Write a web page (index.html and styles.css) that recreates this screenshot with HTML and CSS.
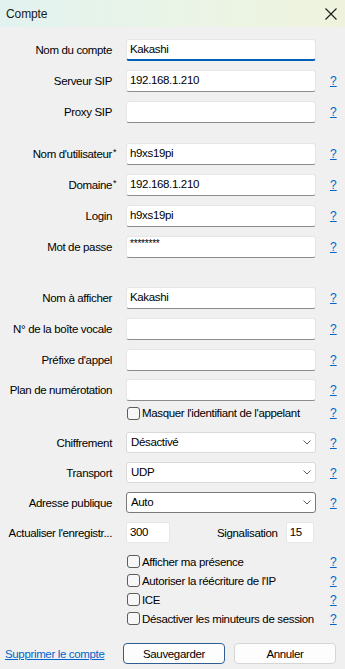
FILE: index.html
```html
<!DOCTYPE html>
<html lang="fr">
<head>
<meta charset="utf-8">
<title>Compte</title>
<link rel="stylesheet" href="styles.css">
</head>
<body>
<div class="window">
  <header class="titlebar">
    <span class="title">Compte</span>
    <svg class="close" width="12" height="12" viewBox="0 0 12 12"><path d="M0.5 0.5 L11.5 11.5 M11.5 0.5 L0.5 11.5" stroke="#1a1a1a" stroke-width="1.1" fill="none"/></svg>
  </header>
  <main class="form">
    <div class="row r1"><span class="lbl">Nom du compte</span><div class="field focused">Kakashi</div><span class="help"></span></div>
    <div class="row"><span class="lbl">Serveur SIP</span><div class="field">192.168.1.210</div><a class="help">?</a></div>
    <div class="row"><span class="lbl">Proxy SIP</span><div class="field"></div><a class="help">?</a></div>

    <div class="row group"><span class="lbl">Nom d'utilisateur<span class="req">*</span></span><div class="field">h9xs19pi</div><a class="help">?</a></div>
    <div class="row"><span class="lbl">Domaine<span class="req">*</span></span><div class="field">192.168.1.210</div><a class="help">?</a></div>
    <div class="row"><span class="lbl">Login</span><div class="field">h9xs19pi</div><a class="help">?</a></div>
    <div class="row"><span class="lbl">Mot de passe</span><div class="field pwd">********</div><a class="help">?</a></div>

    <div class="row group2"><span class="lbl">Nom à afficher</span><div class="field">Kakashi</div><a class="help">?</a></div>
    <div class="row"><span class="lbl">N° de la boîte vocale</span><div class="field"></div><a class="help">?</a></div>
    <div class="row"><span class="lbl">Préfixe d'appel</span><div class="field"></div><a class="help">?</a></div>
    <div class="row tight"><span class="lbl">Plan de numérotation</span><div class="field"></div><a class="help">?</a></div>

    <div class="row check masq"><span class="lbl"></span><label class="cb"><span class="box"></span>Masquer l'identifiant de l'appelant</label><a class="help">?</a></div>

    <div class="row sel first"><span class="lbl">Chiffrement</span><div class="field select">Désactivé<svg class="chev" width="8" height="5" viewBox="0 0 8 5"><path d="M0.5 0.5 L4 4 L7.5 0.5" stroke="#606060" fill="none"/></svg></div><a class="help">?</a></div>
    <div class="row sel"><span class="lbl">Transport</span><div class="field select">UDP<svg class="chev" width="8" height="5" viewBox="0 0 8 5"><path d="M0.5 0.5 L4 4 L7.5 0.5" stroke="#606060" fill="none"/></svg></div><a class="help">?</a></div>
    <div class="row sel"><span class="lbl">Adresse publique</span><div class="field select hover">Auto<svg class="chev" width="8" height="5" viewBox="0 0 8 5"><path d="M0.5 0.5 L4 4 L7.5 0.5" stroke="#606060" fill="none"/></svg></div><a class="help">?</a></div>

    <div class="row sel timers"><span class="lbl">Actualiser l'enregistr...</span>
      <div class="timer-line"><div class="field small">300</div><span class="sig">Signalisation</span><div class="field tiny">15</div></div>
    </div>

    <div class="checks">
      <div class="row check"><span class="lbl"></span><label class="cb"><span class="box"></span>Afficher ma présence</label><a class="help">?</a></div>
      <div class="row check"><span class="lbl"></span><label class="cb"><span class="box"></span>Autoriser la réécriture de l'IP</label><a class="help">?</a></div>
      <div class="row check"><span class="lbl"></span><label class="cb"><span class="box"></span>ICE</label><a class="help">?</a></div>
      <div class="row check"><span class="lbl"></span><label class="cb"><span class="box"></span>Désactiver les minuteurs de session</label><a class="help">?</a></div>
    </div>
  </main>
  <footer class="footer">
    <a class="delete">Supprimer le compte</a>
    <button class="btn primary">Sauvegarder</button>
    <button class="btn">Annuler</button>
  </footer>
</div>
</body>
</html>
```
FILE: styles.css
```css
html, body {
  margin: 0;
  padding: 0;
}
body {
  background: #f0f0f0;
  font-family: "Liberation Sans", Arial, sans-serif;
  font-size: 11.5px;
  letter-spacing: -0.35px;
  color: #000;
  width: 345px;
  height: 669px;
  overflow: hidden;
}
.window {
  display: flex;
  flex-direction: column;
  height: 669px;
}
.titlebar {
  height: 27px;
  display: flex;
  align-items: center;
  justify-content: space-between;
  padding: 0 5px 0 6px;
  background: linear-gradient(to right, #e2f2f0 0%, #e9f4e8 45%, #eff3dd 100%);
  box-sizing: border-box;
  flex: none;
}
.title {
  color: #1a1a1a;
  font-size: 12px;
  letter-spacing: -0.1px;
}
.close {
  display: block;
  margin-right: 3px;
}
.form {
  display: flex;
  flex-direction: column;
  padding-top: 12px;
}
.row {
  display: grid;
  grid-template-columns: 112px 190px 1fr;
  column-gap: 14px;
  align-items: center;
  height: 22px;
  margin-top: 9px;
}
.row.r1 { margin-top: 0; }
.row.group { margin-top: 20px; }
.row.group2 { margin-top: 29px; }
.row.tight { margin-top: 8px; }
.lbl {
  text-align: right;
  white-space: nowrap;
  line-height: 16px;
}
.req {
  display: inline-block;
  width: 6px;
  margin-right: -6px;
  text-align: left;
  padding-left: 1px;
  box-sizing: border-box;
  font-size: 9px;
  vertical-align: 3px;
  line-height: 10px;
}
.field {
  box-sizing: border-box;
  height: 22px;
  background: #fff;
  border: 1px solid #e6e6e6;
  border-bottom-color: #8c8c8c;
  border-radius: 3px;
  padding: 0 3px;
  line-height: 19px;
  white-space: nowrap;
  overflow: hidden;
}
.field.focused {
  border-bottom: 2px solid #005fb8;
  line-height: 18px;
}
.field.pwd {
  font-size: 10px;
  line-height: 14px;
  letter-spacing: -0.2px;
}
.help {
  color: #0066cc;
  text-decoration: underline;
  line-height: 16px;
  font-size: 12px;
  letter-spacing: 0;
  cursor: pointer;
}
.row.check {
  height: 16px;
}
.row.masq {
  margin-top: 4px;
}
.cb {
  display: flex;
  align-items: center;
  white-space: nowrap;
  line-height: 16px;
  margin-left: 1px;
}
.box {
  box-sizing: border-box;
  width: 13px;
  height: 13px;
  border: 1px solid #5c5c5c;
  border-radius: 3px;
  background: #f7f7f7;
  margin-right: 2px;
  flex: none;
}
.row.sel {
  height: 21px;
}
.row.sel.first {
  margin-top: 11px;
}
.field.select {
  height: 21px;
  border: 1px solid #d9d9d9;
  border-radius: 3px;
  display: flex;
  align-items: center;
  justify-content: space-between;
  padding: 0 4px 0 4px;
  line-height: 19px;
}
.field.select.hover {
  border-color: #7a7a7a;
}
.chev {
  display: block;
}
.timers {
  grid-template-columns: 112px 1fr;
}
.timer-line {
  display: flex;
  align-items: center;
}
.field.small {
  width: 44px;
  height: 21px;
  border-color: #e6e6e6;
  border-radius: 2px;
  line-height: 19px;
}
.sig {
  margin-left: 47px;
  margin-right: 8px;
}
.field.tiny {
  width: 28px;
  height: 21px;
  border-color: #e6e6e6;
  border-radius: 2px;
  line-height: 19px;
}
.checks {
  display: flex;
  flex-direction: column;
  margin-top: 9px;
}
.checks .row.check {
  height: 19px;
  margin-top: 0;
}
.footer {
  display: flex;
  align-items: center;
  margin-top: 15px;
  padding-left: 5px;
}
.delete {
  color: #0066cc;
  text-decoration: underline;
  width: 118px;
  flex: none;
  white-space: nowrap;
}
.btn {
  box-sizing: border-box;
  height: 21px;
  width: 103px;
  font-family: inherit;
  font-size: 11.5px;
  letter-spacing: -0.35px;
  color: #000;
  background: #fdfdfd;
  border: 1px solid #d5d5d5;
  border-radius: 4px;
  padding: 0;
  margin-right: 9px;
}
.btn.primary {
  border-color: #2f5f92;
}
```
